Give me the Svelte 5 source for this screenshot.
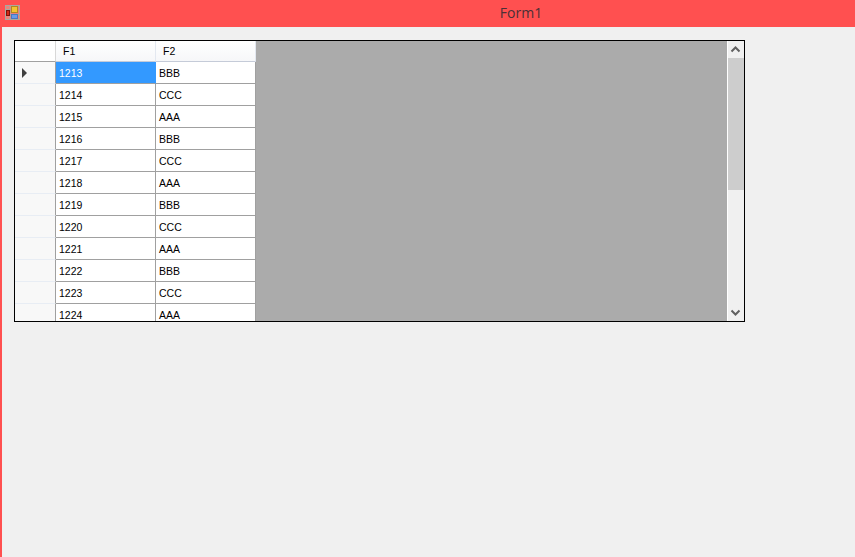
<script>
	const kinds = ['BBB', 'CCC', 'AAA'];
	const rows = Array.from({ length: 12 }, (_, i) => ({ id: 1213 + i, kind: kinds[i % 3] }));
</script>

<div class="window">
	<div class="titlebar">
		<svg class="app-icon" width="15" height="15" viewBox="0 0 15 15">
			<rect x="0.5" y="0.5" width="14" height="14" fill="#f08078" stroke="#a8a8a0" />
			<path d="M5 1v13M1 4.5h4M5 9.5h9" stroke="#a8a8a0" fill="none" />
			<rect x="6.5" y="1.5" width="6" height="6" fill="#f4c430" stroke="#b08a20" />
			<rect x="1.5" y="5.5" width="3" height="5" fill="#d02818" stroke="#7a1408" />
			<rect x="6.5" y="9.5" width="6" height="4" fill="#6a9ae8" stroke="#4a78c0" />
		</svg>
		<span class="title">Form1</span>
	</div>

	<div class="client">
		<div class="grid">
			<div class="table">
				<div class="row head">
					<div class="rowhead corner"></div>
					<div class="colhead">F1</div>
					<div class="colhead">F2</div>
				</div>
				{#each rows as row, i}
					<div class="row">
						<div class="rowhead">
							{#if i === 0}<span class="pointer"></span>{/if}
						</div>
						<div class="cell" class:selected={i === 0}>{row.id}</div>
						<div class="cell">{row.kind}</div>
					</div>
				{/each}
			</div>
			<div class="empty"></div>
			<div class="scrollbar">
				<svg class="arrow" width="16" height="17" viewBox="0 0 16 17">
					<path d="M3.5 10.5 7.5 6.5l4 4" fill="none" stroke="#606060" stroke-width="2" />
				</svg>
				<div class="track"><div class="thumb"></div></div>
				<svg class="arrow" width="16" height="17" viewBox="0 0 16 17">
					<path d="M3.5 6.5l4 4 4-4" fill="none" stroke="#606060" stroke-width="2" />
				</svg>
			</div>
		</div>
	</div>
</div>

<style>
	:global(body) {
		margin: 0;
	}

	.window {
		width: 855px;
		height: 557px;
		background: #ff5050;
		display: flex;
		flex-direction: column;
		overflow: hidden;
	}

	.titlebar {
		height: 27px;
		flex: none;
		display: flex;
		align-items: center;
		justify-content: center;
		position: relative;
	}

	.app-icon {
		position: absolute;
		left: 5px;
		top: 5px;
	}

	.title {
		font-family: 'Open Sans', sans-serif;
		font-size: 14px;
		color: #4a3036;
		margin-left: 187px;
		margin-top: -3px;
	}

	.client {
		flex: 1;
		margin-left: 2px;
		background: #f0f0f0;
		padding: 13px 0 0 12px;
	}

	.grid {
		width: 729px;
		height: 280px;
		border: 1px solid #000;
		background: #ababab;
		display: flex;
		overflow: hidden;
		font-family: 'Liberation Sans', Arial, sans-serif;
		font-size: 10.5px;
		color: #000;
	}

	.table {
		flex: none;
		width: 241px;
	}

	.row {
		display: flex;
		height: 22px;
	}

	.row.head {
		height: 21px;
	}

	.rowhead {
		flex: none;
		background: #f8f8f8;
		border-right: 1px solid #a0a0a0;
		border-bottom: 1px solid #e8edf4;
		box-sizing: border-box;
		width: 41px;
		display: flex;
		align-items: center;
		padding-left: 7px;
	}

	.rowhead.corner {
		background: #fff;
		border-right-color: #d8d8d8;
		border-bottom: 1px solid #a0a0a0;
	}

	.colhead {
		width: 100px;
		box-sizing: border-box;
		background: linear-gradient(#fff, #f6f7f9);
		border-right: 1px solid #e3e8f0;
		border-bottom: 1px solid #c5cbd8;
		padding-left: 7px;
		line-height: 20px;
	}

	.cell {
		width: 100px;
		box-sizing: border-box;
		background: #fff;
		border-right: 1px solid #a0a0a0;
		border-bottom: 1px solid #a0a0a0;
		padding: 1px 0 0 3px;
		line-height: 21px;
	}

	.cell.selected {
		background: #3399ff;
		color: #fff;
		border-right: 1px solid #3399ff;
	}

	.pointer {
		width: 0;
		height: 0;
		border-left: 5px solid #404040;
		border-top: 5px solid transparent;
		border-bottom: 5px solid transparent;
	}

	.empty {
		flex: 1;
	}

	.scrollbar {
		width: 17px;
		box-sizing: border-box;
		flex: none;
		border-left: 1px solid #fff;
		background: #f0f0f0;
		display: flex;
		flex-direction: column;
	}

	.arrow {
		flex: none;
		display: block;
	}

	.track {
		flex: 1;
	}

	.thumb {
		height: 132px;
		background: #cdcdcd;
	}
</style>
